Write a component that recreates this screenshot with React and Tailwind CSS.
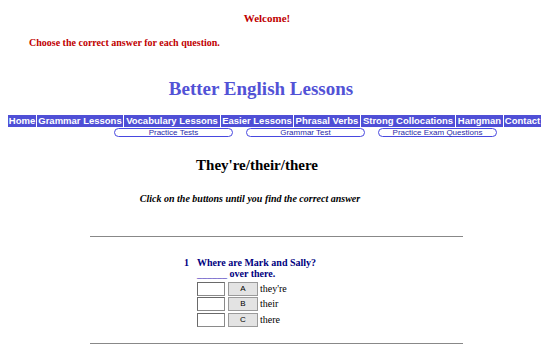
import React from "react";

const serif = { fontFamily: '"Liberation Serif", "Times New Roman", serif' };
const sans = { fontFamily: '"Liberation Sans", Arial, sans-serif' };

const navItems = [
  ["Home", "w-[28px]"],
  ["Grammar Lessons", "w-[86px]"],
  ["Vocabulary Lessons", "w-[96px]"],
  ["Easier Lessons", "w-[72px]"],
  ["Phrasal Verbs", "w-[66px]"],
  ["Strong Collocations", "w-[94px]"],
  ["Hangman", "w-[47px]"],
  ["Contact", "w-[37px]"],
];

function Row({ letter, label, mt }) {
  return (
    <div className={`flex items-center h-[14px] ${mt}`}>
      <div className="w-[28px] h-[14px] bg-white border border-[#8a8a8a] border-t-[#6a6a6a] border-l-[#6a6a6a]" />
      <div
        className="ml-[3px] w-[30px] h-[14px] bg-[#e3e3e3] border border-[#9a9a9a] flex items-center justify-center text-[8px] text-black leading-none"
        style={sans}
      >
        {letter}
      </div>
      <div className="ml-[2px] text-[10px] text-black leading-none" style={serif}>
        {label}
      </div>
    </div>
  );
}

export default function App() {
  return (
    <div className="w-[549px] h-[349px] bg-white overflow-hidden" style={serif}>
      <div className="pt-[12px] w-[534px] text-center h-[25px] leading-[13px] text-[11px] font-bold text-[#c00000]">
        Welcome!
      </div>
      <div className="mt-[12px] pl-[29px] h-[12px] leading-[12px] text-[10px] font-bold text-[#c00000]">
        Choose the correct answer for each question.
      </div>
      <div className="mt-[29px] w-[522px] text-center h-[22px] leading-[22px] text-[19px] font-bold text-[#5252d6]">
        Better English Lessons
      </div>
      <div className="mt-[15px] ml-[8px] flex gap-px h-[12px]" style={sans}>
        {navItems.map(([t, w]) => (
          <div
            key={t}
            className={`${w} h-[12px] bg-[#4f4fd6] text-white font-bold text-[9.5px] leading-[12px] text-center whitespace-nowrap overflow-hidden`}
          >
            {t}
          </div>
        ))}
      </div>
      <div className="mt-[1px] ml-[114px] flex gap-[13px] h-[9px]" style={sans}>
        {["Practice Tests", "Grammar Test", "Practice Exam Questions"].map((t) => (
          <div
            key={t}
            className="w-[119px] h-[9px] rounded-full border border-[#4848e0] text-[8px] leading-[7px] text-center text-[#2a2aa8] whitespace-nowrap"
          >
            {t}
          </div>
        ))}
      </div>
      <div className="mt-[19px] w-[514px] text-center h-[18px] leading-[18px] text-[15px] font-bold text-black">
        They're/their/there
      </div>
      <div className="mt-[18px] w-[500px] text-center h-[14px] leading-[14px] text-[10px] font-bold italic text-black">
        Click on the buttons until you find the correct answer
      </div>
      <div className="mt-[30px] ml-[90px] w-[373px] border-t border-[#888]" />
      <div className="mt-[20px] flex text-[10px] font-bold text-[#000080]">
        <div className="ml-[184px] w-[13px] leading-[11px]">1</div>
        <div>
          <div className="h-[11px] leading-[11px]">Where are Mark and Sally?</div>
          <div className="h-[11px] leading-[11px]">
            <span className="text-[#6a5ac8]">______</span> over there.
          </div>
        </div>
      </div>
      <div className="ml-[197px] mt-[3px]">
        <Row letter="A" label="they're" mt="" />
        <Row letter="B" label="their" mt="mt-[1px]" />
        <Row letter="C" label="there" mt="mt-[2px]" />
      </div>
      <div className="mt-[16px] ml-[90px] w-[373px] border-t border-[#888]" />
    </div>
  );
}
